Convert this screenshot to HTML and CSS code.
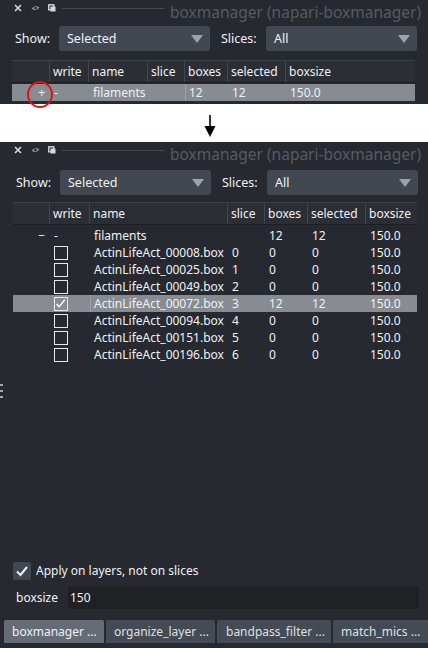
FILE: index.html
```html
<!DOCTYPE html>
<html>
<head>
<meta charset="utf-8">
<link rel="stylesheet" href="styles.css">
</head>
<body>
<div class="panel panel-top">
  <div class="titlebar">
    <div class="ticons">
      <svg class="ic" width="8" height="8" viewBox="0 0 8 8"><path d="M1 1L7 7M7 1L1 7" stroke="#d6d8db" stroke-width="1.6"/></svg>
      <svg class="ic" width="9" height="8" viewBox="0 0 9 8"><path d="M0.5 4.5Q4.5 0 8.5 3.5Q4.5 8 0.5 4.5Z" fill="#8d9197"/><circle cx="4.5" cy="4" r="1.3" fill="#262930"/></svg>
      <svg class="ic" width="8" height="8" viewBox="0 0 8 8"><rect x="0.8" y="0.8" width="5" height="5" fill="none" stroke="#d6d8db" stroke-width="1.4"/><rect x="2.5" y="2.5" width="5" height="5" fill="#d6d8db"/></svg>
    </div>
    <div class="tline"></div>
    <div class="ttext">boxmanager (napari-boxmanager)</div>
  </div>
  <div class="controls">
    <span class="lbl lbl-show">Show:</span>
    <div class="combo"><span>Selected</span><i class="tri"></i></div>
    <span class="lbl lbl-slices">Slices:</span>
    <div class="combo"><span>All</span><i class="tri"></i></div>
  </div>
  <div class="table t1">
    <div class="hrow">
      <div class="hc"></div><div class="hc">write</div><div class="hc">name</div><div class="hc">slice</div><div class="hc">boxes</div><div class="hc">selected</div><div class="hc last">boxsize</div>
    </div>
    <div class="row sel">
      <div class="c tree">+</div><div class="c">-</div><div class="c">filaments</div><div class="c"></div><div class="c cur">12</div><div class="c">12</div><div class="c">150.0</div>
    </div>
  </div>
  <div class="redcircle"></div>
</div>

<div class="arrowzone">
  <svg width="14" height="24" viewBox="0 0 14 24"><path d="M7 0V13" stroke="#000" stroke-width="1.6"/><path d="M1.5 11H12.5L7 22Z" fill="#000"/></svg>
</div>

<div class="panel panel-bot">
  <div class="titlebar">
    <div class="ticons">
      <svg class="ic" width="8" height="8" viewBox="0 0 8 8"><path d="M1 1L7 7M7 1L1 7" stroke="#d6d8db" stroke-width="1.6"/></svg>
      <svg class="ic" width="9" height="8" viewBox="0 0 9 8"><path d="M0.5 4.5Q4.5 0 8.5 3.5Q4.5 8 0.5 4.5Z" fill="#8d9197"/><circle cx="4.5" cy="4" r="1.3" fill="#262930"/></svg>
      <svg class="ic" width="8" height="8" viewBox="0 0 8 8"><rect x="0.8" y="0.8" width="5" height="5" fill="none" stroke="#d6d8db" stroke-width="1.4"/><rect x="2.5" y="2.5" width="5" height="5" fill="#d6d8db"/></svg>
    </div>
    <div class="tline"></div>
    <div class="ttext">boxmanager (napari-boxmanager)</div>
  </div>
  <div class="controls c2">
    <span class="lbl lbl-show">Show:</span>
    <div class="combo"><span>Selected</span><i class="tri"></i></div>
    <span class="lbl lbl-slices">Slices:</span>
    <div class="combo"><span>All</span><i class="tri"></i></div>
  </div>
  <div class="table t2">
    <div class="hrow">
      <div class="hc"></div><div class="hc">write</div><div class="hc">name</div><div class="hc">slice</div><div class="hc">boxes</div><div class="hc">selected</div><div class="hc last">boxsize</div>
    </div>
    <div class="row">
      <div class="c tree">−</div><div class="c">-</div><div class="c">filaments</div><div class="c"></div><div class="c">12</div><div class="c">12</div><div class="c">150.0</div>
    </div>
    <div class="row">
      <div class="c"></div><div class="c"><i class="cb"></i></div><div class="c">ActinLifeAct_00008.box</div><div class="c">0</div><div class="c">0</div><div class="c">0</div><div class="c">150.0</div>
    </div>
    <div class="row">
      <div class="c"></div><div class="c"><i class="cb"></i></div><div class="c">ActinLifeAct_00025.box</div><div class="c">1</div><div class="c">0</div><div class="c">0</div><div class="c">150.0</div>
    </div>
    <div class="row">
      <div class="c"></div><div class="c"><i class="cb"></i></div><div class="c">ActinLifeAct_00049.box</div><div class="c">2</div><div class="c">0</div><div class="c">0</div><div class="c">150.0</div>
    </div>
    <div class="row sel">
      <div class="c"></div><div class="c"><i class="cb checked"><svg width="11" height="11" viewBox="0 0 11 11"><path d="M1.5 6L4.2 8.8L9.8 1.8" fill="none" stroke="#fff" stroke-width="1.4"/></svg></i></div><div class="c cur">ActinLifeAct_00072.box</div><div class="c">3</div><div class="c">12</div><div class="c">12</div><div class="c">150.0</div>
    </div>
    <div class="row">
      <div class="c"></div><div class="c"><i class="cb"></i></div><div class="c">ActinLifeAct_00094.box</div><div class="c">4</div><div class="c">0</div><div class="c">0</div><div class="c">150.0</div>
    </div>
    <div class="row">
      <div class="c"></div><div class="c"><i class="cb"></i></div><div class="c">ActinLifeAct_00151.box</div><div class="c">5</div><div class="c">0</div><div class="c">0</div><div class="c">150.0</div>
    </div>
    <div class="row">
      <div class="c"></div><div class="c"><i class="cb"></i></div><div class="c">ActinLifeAct_00196.box</div><div class="c">6</div><div class="c">0</div><div class="c">0</div><div class="c">150.0</div>
    </div>
  </div>
  <div class="checkrow">
    <span class="bigcb"><svg width="14" height="14" viewBox="0 0 14 14"><path d="M2 7.5L5.5 11L12 3" fill="none" stroke="#f0f1f2" stroke-width="2"/></svg></span>
    <span class="cbtext">Apply on layers, not on slices</span>
  </div>
  <div class="sizerow">
    <span class="sizelbl">boxsize</span>
    <div class="input">150</div>
  </div>
  <div class="tabs">
    <div class="tab active">boxmanager ...</div>
    <div class="tab">organize_layer ...</div>
    <div class="tab">bandpass_filter ...</div>
    <div class="tab">match_mics ...</div>
  </div>
  <div class="handle"><i></i><i></i><i></i></div>
</div>
</body>
</html>
```

FILE: styles.css
```css
* { box-sizing: border-box; }
html, body { margin: 0; padding: 0; background: #ffffff; }
body {
  width: 428px;
  height: 648px;
  overflow: hidden;
  font-family: "Noto Sans", "Open Sans", sans-serif;
  font-size: 12px;
  color: #f0f1f2;
}
.panel {
  position: relative;
  background: #262930;
  display: flex;
  flex-direction: column;
}
.panel-top { height: 104px; }
.panel-bot { height: 506px; }

.titlebar {
  height: 22px;
  display: flex;
  align-items: center;
  padding-left: 14px;
}
.ticons { display: flex; align-items: center; gap: 8px; margin-top: -7px; }
.ticons .ic:nth-child(2) { margin-left: 1px; }
.tline {
  width: 102px;
  height: 1px;
  background: #44484f;
  margin-left: 6px;
  margin-top: -6px;
}
.ttext {
  margin-left: 6px;
  font-size: 15.5px;
  color: #565b63;
  white-space: nowrap;
  line-height: 20px;
  margin-top: 1px;
}

.controls {
  display: flex;
  align-items: center;
  height: 25px;
  margin-top: 4px;
  padding-left: 15px;
}
.controls.c2 { margin-top: 6px; padding-left: 16px; }
.lbl { white-space: nowrap; font-size: 12.5px; }
.lbl-show { width: 44px; }
.lbl-slices { width: 45px; margin-left: 11px; }
.combo {
  width: 151px;
  height: 25px;
  background: #414851;
  border-radius: 3px;
  display: flex;
  align-items: center;
  justify-content: space-between;
  padding: 0 7px 0 8px;
  font-size: 12.5px;
}
.tri {
  width: 0; height: 0;
  border-left: 6px solid transparent;
  border-right: 6px solid transparent;
  border-top: 8px solid #9da2a9;
}

.table { margin-left: 12px; }
.t1 { margin-top: 9px; width: 403px; }
.t2 { margin-top: 7px; margin-left: 13px; width: 404px; flex: 1; }
.hrow {
  display: grid;
  height: 23px;
  background: #2b2e35;
  border-top: 1px solid #3b3f46;
  border-bottom: 1px solid #1c1e22;
}
.t1 .hrow, .t1 .row { grid-template-columns: 38px 39px 59px 37px 43px 58px 129px; }
.t2 .hrow, .t2 .row { grid-template-columns: 37px 40px 138px 37px 43px 58px 51px; }
.hc {
  border-right: 1px solid #42464d;
  padding-left: 3px;
  line-height: 21px;
  white-space: nowrap;
}
.hc.last { border-right: none; }
.row {
  display: grid;
  height: 17px;
  line-height: 17px;
  white-space: nowrap;
}
.t1 .row { margin-top: 1px; }
.t2 .hrow + .row { margin-top: 2px; }
.row.sel { background: #868c91; }
.c { padding-left: 4px; overflow: visible; }
.c.tree { text-align: right; padding-right: 5px; padding-left: 0; }
.c.cur { box-shadow: inset 1px 0 0 #9ca1a6; }
.cb {
  display: block;
  width: 14px;
  height: 14px;
  border: 1.5px solid #e8e9ea;
  margin-top: 1.5px;
  position: relative;
}
.cb svg { position: absolute; left: 0; top: 0; }

.redcircle {
  position: absolute;
  left: 27px;
  top: 81px;
  width: 26px;
  height: 27px;
  border: 2px solid #dd1111;
  border-radius: 50%;
}

.arrowzone {
  height: 38px;
  display: flex;
  justify-content: center;
  align-items: flex-start;
  padding-top: 11px;
  padding-right: 8px;
}

.checkrow {
  display: flex;
  align-items: center;
  margin-left: 13px;
  height: 19px;
}
.bigcb {
  width: 18px;
  height: 18px;
  background: #414851;
  border-radius: 2px;
  display: flex;
  align-items: center;
  justify-content: center;
}
.cbtext { margin-left: 5px; }
.sizerow {
  display: flex;
  align-items: center;
  margin-top: 6px;
  height: 23px;
}
.sizelbl { width: 68px; padding-left: 16px; }
.input {
  width: 351px;
  height: 23px;
  background: #1f2125;
  line-height: 23px;
  padding-left: 2px;
}
.tabs {
  display: flex;
  gap: 2px;
  margin-top: 11px;
  margin-left: 4px;
  margin-bottom: 5px;
  height: 23px;
}
.tab {
  background: #454b54;
  color: #dde0e4;
  line-height: 23px;
  padding: 0 7px 0 8px;
  white-space: nowrap;
  border-radius: 2px 2px 0 0;
  flex: none;
}
.tab:nth-child(1) { width: 100px; }
.tab:nth-child(2) { width: 109px; }
.tab:nth-child(3) { width: 114px; padding-left: 9px; }
.tab:nth-child(4) { width: 100px; }
.tab.active { background: #656c76; color: #eef0f2; }

.handle {
  position: absolute;
  left: 0;
  top: 242px;
  display: flex;
  flex-direction: column;
  gap: 4px;
}
.handle i { display: block; width: 3px; height: 2px; background: #a4a8ad; }
```
